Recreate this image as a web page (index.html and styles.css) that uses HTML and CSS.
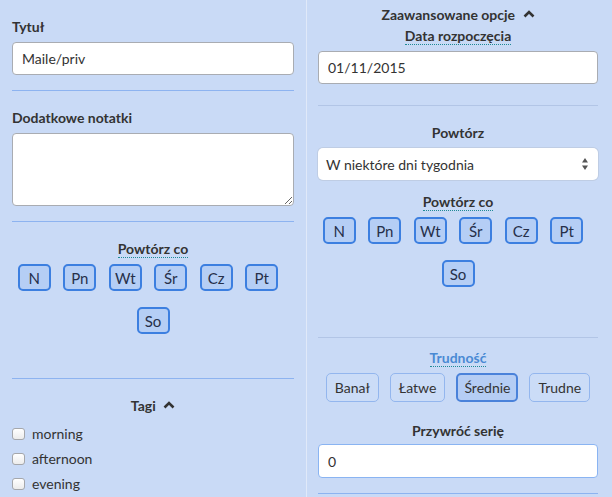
FILE: index.html
```html
<!DOCTYPE html>
<html lang="pl">
<head>
  <meta charset="UTF-8" />
  <title>Edycja zadania</title>
  <link rel="stylesheet" href="styles.css">
</head>
<body>
  <div class="page">
    <!-- Basic fields -->
    <section class="col col-left">
      <label class="label">Tytuł</label>
      <input class="field" type="text" value="Maile/priv">
      <hr class="sep">

      <label class="label spaced">Dodatkowe notatki</label>
      <textarea class="field notes"></textarea>
      <hr class="sep">

      <div class="title"><span class="hint">Powtórz co</span></div>
      <div class="days">
        <div class="days-row">
          <button class="day">N</button>
          <button class="day">Pn</button>
          <button class="day">Wt</button>
          <button class="day">Śr</button>
          <button class="day">Cz</button>
          <button class="day">Pt</button>
        </div>
        <div class="days-row last">
          <button class="day">So</button>
        </div>
      </div>
      <hr class="sep tags-sep">

      <div class="title">Tagi <svg class="caret" viewBox="0 0 12 8"><polyline points="1.5,6.5 6,2 10.5,6.5" /></svg></div>
      <ul class="tags">
        <li><label><input type="checkbox"> morning</label></li>
        <li><label><input type="checkbox"> afternoon</label></li>
        <li><label><input type="checkbox"> evening</label></li>
      </ul>
    </section>

    <!-- Advanced options -->
    <section class="col col-right">
      <div class="title top">Zaawansowane opcje <svg class="caret" viewBox="0 0 12 8"><polyline points="1.5,6.5 6,2 10.5,6.5" /></svg></div>
      <div class="title tight"><span class="hint">Data rozpoczęcia</span></div>
      <input class="field" type="text" value="01/11/2015">
      <hr class="sep light">

      <div class="title">Powtórz</div>
      <div class="select">
        <span>W niektóre dni tygodnia</span>
        <svg class="arrows" viewBox="0 0 8 14"><path d="M4 1 L7 5.5 H1 Z M4 13 L7 8.5 H1 Z" /></svg>
      </div>

      <div class="title near"><span class="hint">Powtórz co</span></div>
      <div class="days">
        <div class="days-row">
          <button class="day">N</button>
          <button class="day">Pn</button>
          <button class="day">Wt</button>
          <button class="day">Śr</button>
          <button class="day">Cz</button>
          <button class="day">Pt</button>
        </div>
        <div class="days-row last">
          <button class="day">So</button>
        </div>
      </div>
      <hr class="sep light level-sep">

      <div class="title close"><span class="hint link">Trudność</span></div>
      <div class="levels">
        <button class="level">Banał</button>
        <button class="level">Łatwe</button>
        <button class="level active">Średnie</button>
        <button class="level">Trudne</button>
      </div>

      <div class="title streak">Przywróć serię</div>
      <input class="field focus" type="text" value="0">
      <hr class="sep">
    </section>
  </div>
</body>
</html>
```

FILE: styles.css
```css
* {
  box-sizing: border-box;
  margin: 0;
  padding: 0;
}

body {
  font-family: Lato, "Open Sans", sans-serif;
  font-size: 14px;
  color: #333;
  background: #c9daf6;
}

.page {
  display: grid;
  grid-template-columns: 306px 1fr;
  height: 497px;
  overflow: hidden;
}

.col {
  display: flex;
  flex-direction: column;
}

.col-left {
  padding: 17px 12px 0 12px;
}

.col-right {
  border-left: 1px solid #e0e9f9;
  padding: 5px 14px 0 11px;
}

/* Labels and titles */
.label {
  display: block;
  font-weight: bold;
  font-size: 14px;
  line-height: 20px;
  margin-bottom: 5px;
}

.label.spaced {
  margin-top: 17px;
}

.title {
  font-weight: bold;
  font-size: 14px;
  line-height: 20px;
  text-align: center;
  margin-top: 17px;
  margin-bottom: 5px;
}

.title.top {
  margin-top: 0;
  margin-bottom: 1px;
}

.title.tight {
  margin-top: 0;
  margin-bottom: 5px;
}

.title.near {
  margin-top: 12px;
}

.title.close {
  margin-top: 10px;
}

.title.streak {
  margin-top: 19px;
  margin-bottom: 3px;
}

.hint {
  border-bottom: 1px dotted #1f8a96;
}

.hint.link {
  color: #4a8ad4;
}

.caret {
  width: 12px;
  height: 8px;
  margin-left: 4px;
  vertical-align: 2px;
  fill: none;
  stroke: #333;
  stroke-width: 2.6;
}

/* Inputs */
.field {
  display: block;
  width: 100%;
  height: 33px;
  padding: 0 9px;
  font-family: inherit;
  font-size: 14px;
  color: #333;
  background: #fff;
  border: 1px solid #a9acb2;
  border-radius: 4px;
}

.field.notes {
  height: 73px;
  resize: vertical;
}

.field.focus {
  height: 34px;
  border-color: #8ab4f2;
}

.select {
  display: flex;
  align-items: center;
  justify-content: space-between;
  height: 32px;
  padding: 0 9px 0 8px;
  background: #fff;
  border-radius: 5px;
  box-shadow: 0 0 0 1px #bfcde4;
}

.arrows {
  width: 8px;
  height: 14px;
  fill: #555;
}

.sep {
  border: none;
  height: 1px;
  background: #8db3f0;
  margin: 15px 0 0;
}

.sep.light {
  background: #b2c5e6;
  margin-top: 21px;
}

.tags-sep {
  margin-top: 44px;
}

.sep.level-sep {
  margin-top: 50px;
}

/* Day toggles */
.days-row {
  display: flex;
  justify-content: center;
  gap: 12.5px;
  padding-right: 10px;
}

.days-row.last {
  padding-right: 0;
  margin-top: 16px;
}

.day {
  width: 33px;
  height: 27px;
  font-family: inherit;
  font-size: 15px;
  color: #26304a;
  background: #b5cef5;
  border: 2px solid #3c7fe0;
  border-radius: 5px;
}

/* Difficulty */
.levels {
  display: flex;
  justify-content: center;
  gap: 11px;
}

.level {
  height: 29px;
  padding: 0 8px;
  font-family: inherit;
  font-size: 14px;
  color: #333;
  background: #cbdcf7;
  border: 1px solid #93b6ee;
  border-radius: 5px;
}

.level.active {
  padding: 0 6px;
  background: #b5cdf4;
  border: 2px solid #4a82da;
}

/* Tags */
.tags {
  list-style: none;
}

.tags li {
  line-height: 25px;
}

.tags label {
  display: flex;
  align-items: center;
  gap: 7px;
}

.tags input {
  appearance: none;
  width: 13px;
  height: 12px;
  border: 1px solid #a5a7ab;
  border-radius: 3px;
  background: linear-gradient(#fff, #ececec);
}
```
